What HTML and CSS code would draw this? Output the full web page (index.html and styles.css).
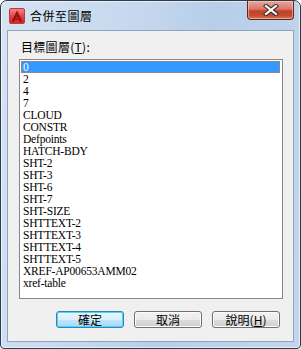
FILE: index.html
```html
<!DOCTYPE html>
<html>
<head>
<meta charset="utf-8">
<link rel="stylesheet" href="styles.css">
</head>
<body>
<div class="window">
  <div class="titlebar">
    <div class="title-left">
      <svg class="app-icon" width="16" height="16" viewBox="0 0 16 16">
        <defs>
          <linearGradient id="ig" x1="0" y1="0" x2="0" y2="1">
            <stop offset="0" stop-color="#f08a8a"/>
            <stop offset="0.5" stop-color="#e04848"/>
            <stop offset="1" stop-color="#c82828"/>
          </linearGradient>
        </defs>
        <rect x="0.5" y="0.5" width="15" height="15" rx="1.5" fill="url(#ig)" stroke="#c03838"/>
        <path d="M8 2.5 L13.5 13.5 L10.5 13.5 L8 8.5 L5.5 13.5 L2.5 13.5 Z" fill="#a80c0c"/>
        <path d="M8 9.5 L9.3 12 L6.7 12 Z" fill="#a80c0c"/>
      </svg>
      <span class="title">合併至圖層</span>
    </div>
    <div class="close-btn">
      <svg width="16" height="12" viewBox="0 0 16 12">
        <path d="M3 2 L13 10 M13 2 L3 10" stroke="#3a2a2a" stroke-width="4.2" stroke-linecap="square" fill="none"/>
        <path d="M3 2 L13 10 M13 2 L3 10" stroke="#ffffff" stroke-width="2.2" stroke-linecap="square" fill="none"/>
      </svg>
    </div>
  </div>
  <div class="client">
    <div class="label">目標圖層(<u>T</u>):</div>
    <div class="listbox">
      <div class="item selected">0</div>
      <div class="item">2</div>
      <div class="item">4</div>
      <div class="item">7</div>
      <div class="item">CLOUD</div>
      <div class="item">CONSTR</div>
      <div class="item">Defpoints</div>
      <div class="item">HATCH-BDY</div>
      <div class="item">SHT-2</div>
      <div class="item">SHT-3</div>
      <div class="item">SHT-6</div>
      <div class="item">SHT-7</div>
      <div class="item">SHT-SIZE</div>
      <div class="item">SHTTEXT-2</div>
      <div class="item">SHTTEXT-3</div>
      <div class="item">SHTTEXT-4</div>
      <div class="item">SHTTEXT-5</div>
      <div class="item">XREF-AP00653AMM02</div>
      <div class="item">xref-table</div>
    </div>
    <div class="buttons">
      <div class="btn default">確定</div>
      <div class="btn">取消</div>
      <div class="btn">說明(<u>H</u>)</div>
    </div>
  </div>
</div>
</body>
</html>
```
FILE: styles.css
```css
html, body {
  margin: 0;
  padding: 0;
  background: #ffffff;
}
.window {
  width: 301px;
  height: 349px;
  box-sizing: border-box;
  border: 1px solid #2d3b4c;
  border-radius: 7px 7px 4px 4px;
  background: linear-gradient(100deg, #d6e4f3 0%, #c4d7ed 40%, #b8cee8 60%, #c3d6ec 100%);
  padding: 0 7px 7px 7px;
  display: flex;
  flex-direction: column;
  box-shadow: inset 0 0 0 1px rgba(255,255,255,0.6);
}
.titlebar {
  height: 29px;
  display: flex;
  justify-content: space-between;
  align-items: flex-start;
}
.title-left {
  display: flex;
  align-items: center;
  margin-top: 7px;
  margin-left: 1px;
}
.app-icon {
  display: block;
}
.title {
  font-family: "Noto Sans CJK TC", "Noto Sans", sans-serif;
  font-size: 12px;
  line-height: 16px;
  color: #000;
  margin-left: 5px;
  letter-spacing: 0.5px;
}
.close-btn {
  width: 45px;
  height: 18px;
  margin-right: -1px;
  border: 1px solid #5a2a22;
  border-top: none;
  border-radius: 0 0 4px 4px;
  background: linear-gradient(#e9a898 0%, #d9786a 45%, #c2412c 55%, #c54a30 80%, #d77a5a 100%);
  box-shadow: inset 0 0 0 1px rgba(255,220,210,0.5);
  display: flex;
  align-items: center;
  justify-content: center;
}
.close-btn svg {
  display: block;
}
.client {
  flex: 1;
  background: #f0f0f0;
  border: 1px solid #8ea4c0;
  margin: 0 -1px -1px -1px;
  padding: 9px 10px 0 11px;
  display: flex;
  flex-direction: column;
  align-items: flex-start;
  font-family: "Noto Sans CJK TC", "Noto Sans", sans-serif;
}
.label {
  font-size: 12px;
  line-height: 14px;
  height: 14px;
  padding-left: 2px;
  color: #000;
  margin-bottom: 5px;
  letter-spacing: 0.3px;
}
.listbox {
  width: 264px;
  height: 240px;
  box-sizing: border-box;
  border: 1px solid #828790;
  background: #ffffff;
  padding: 1px 2px 1px 1px;
  font-family: "Liberation Serif", serif;
  font-size: 11.5px;
  letter-spacing: -0.2px;
}
.item {
  height: 12px;
  line-height: 12px;
  padding-left: 2px;
  color: #000;
  white-space: nowrap;
}
.item.selected {
  background: #3399ff;
  color: #ffffff;
  outline: 1px dotted #e07a20;
  outline-offset: -1px;
}
.buttons {
  align-self: stretch;
  display: flex;
  justify-content: flex-end;
  gap: 10px;
  margin-top: 12px;
  padding-right: 3px;
}
.btn {
  width: 68px;
  height: 17px;
  box-sizing: border-box;
  border: 1px solid #707070;
  border-radius: 3px;
  background: linear-gradient(#f2f2f2 0%, #ebebeb 50%, #dddddd 50%, #cfcfcf 100%);
  box-shadow: inset 0 0 0 1px #fcfcfc;
  font-size: 12px;
  line-height: 15px;
  text-align: center;
  color: #000;
}
.btn.default {
  border-color: #3c7fb1;
  box-shadow: inset 0 0 0 1px #48d8fb;
  background: linear-gradient(#eaf6fd 0%, #d9f0fc 50%, #bee6fd 50%, #a7d9f5 100%);
}
```
